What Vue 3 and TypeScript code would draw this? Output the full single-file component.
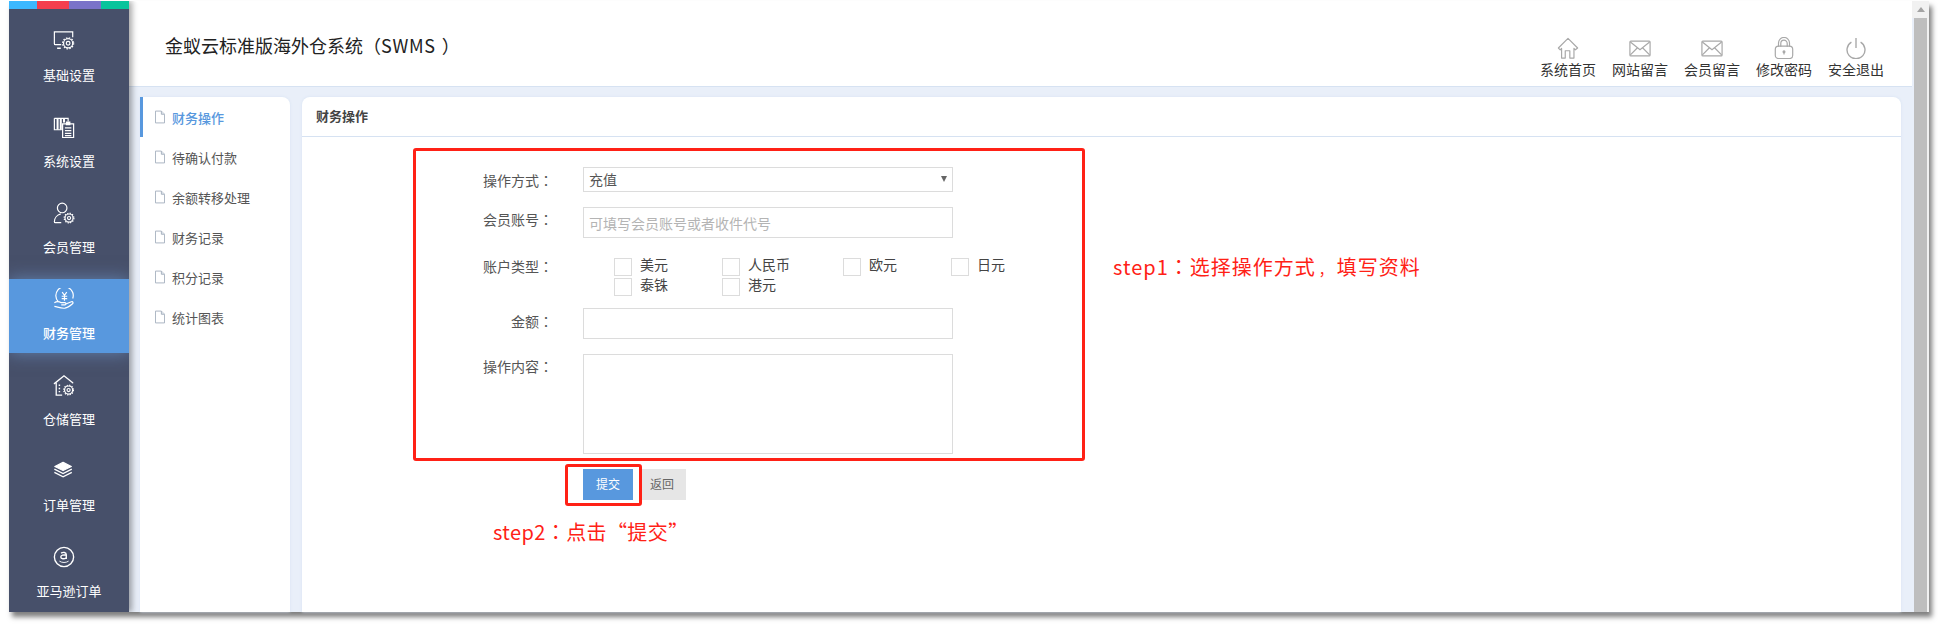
<script setup lang="ts">
const stripes = ['#3cb8ff', '#f43e4e', '#7a73c9', '#08c49c']
const sideItems = [
  { key: 'basic', label: '基础设置' },
  { key: 'system', label: '系统设置' },
  { key: 'member', label: '会员管理' },
  { key: 'finance', label: '财务管理', active: true },
  { key: 'store', label: '仓储管理' },
  { key: 'order', label: '订单管理' },
  { key: 'amazon', label: '亚马逊订单' },
]
const topLinks = [
  { key: 'home', label: '系统首页' },
  { key: 'mail', label: '网站留言' },
  { key: 'mail', label: '会员留言' },
  { key: 'lock', label: '修改密码' },
  { key: 'power', label: '安全退出' },
]
const subMenu = ['财务操作', '待确认付款', '余额转移处理', '财务记录', '积分记录', '统计图表']
const currencies = ['美元', '人民币', '欧元', '日元', '泰铢', '港元']
</script>

<template>
  <div class="page">
    <div class="window">
      <aside class="sidebar">
        <div class="strip">
          <span v-for="c in stripes" :key="c" class="stripe" :style="{ background: c }"></span>
        </div>
        <nav class="side-nav">
          <a v-for="item in sideItems" :key="item.label" class="side-item" :class="{ active: item.active }">
            <svg class="side-icon" viewBox="0 0 24 24" fill="none" stroke="#fff" stroke-width="1.3">
              <template v-if="item.key === 'basic'">
                <path d="M9 16H2.500a1 1 0 0 1-1-1V2h20v6" />
                <path d="M4.500 20h4" stroke-width="1.600" />
                <circle cx="16.500" cy="14.500" r="2" />
                <circle cx="16.500" cy="14.500" r="5" />
                <circle cx="16.500" cy="14.500" r="6" stroke-width="1.400" stroke-dasharray="1.600 1.540" />
              </template>
              <template v-else-if="item.key === 'system'">
                <path d="M1.500 2.500h15V6M1.500 2.500V15h8" />
                <path d="M5 2.500V15M8.500 2.500V15M12 2.500V7" stroke-width="2.200" />
                <path d="M10.500 8.500h12v15h-12z" fill="#47506a" />
                <path d="M14 6h5v4h-5z" fill="#fff" stroke="none" />
                <path d="M13 13h7M13 16h7M13 19h7M13 21.500h7" />
              </template>
              <template v-else-if="item.key === 'member'">
                <circle cx="10" cy="6.500" r="5.200" />
                <path d="M8.500 13C4.500 14 1.500 17.500 1.500 21.500c0 .5.5 1 1 1H9" />
                <circle cx="17.500" cy="17.500" r="1.700" />
                <circle cx="17.500" cy="17.500" r="4.400" />
                <circle cx="17.500" cy="17.500" r="5.300" stroke-width="1.300" stroke-dasharray="1.400 1.375" />
              </template>
              <template v-else-if="item.key === 'finance'">
                <path d="M5.500 14.500A9.500 9.500 0 1 1 21.500 11.500" />
                <path d="M10 4.500l2.500 3.500 2.500-3.500M12.500 8v6M9.500 9h6M9.500 11.500h6" />
                <path d="M1.500 16c3-2 5-1.500 7.500 0h4c1.500 0 1.500 2.500 0 2.500H9M14 17.500l6-2.500c2-.5 2.500 1.500 1 2.500-3 2.500-5 4-8 4.500-4 .5-7-1-11.500-2" stroke-linejoin="round" />
              </template>
              <template v-else-if="item.key === 'store'">
                <path d="M1.500 10.500L12 2l9.500 7.500" stroke-linecap="round" stroke-width="1.500" />
                <path d="M3.500 9.500v13.500H10" stroke-width="1.400" />
                <path d="M7 11.500v1.500M7 15v1.500M7 18.500V20" stroke-width="1.600" />
                <circle cx="17" cy="17.500" r="1.700" />
                <circle cx="17" cy="17.500" r="4.400" />
                <circle cx="17" cy="17.500" r="5.300" stroke-width="1.300" stroke-dasharray="1.400 1.375" />
              </template>
              <template v-else-if="item.key === 'order'">
                <path d="M11 2.500L2 7l9 4.500L20 7z" fill="#fff" stroke-linejoin="round" />
                <path d="M1.500 10l9.500 4.800 9.500-4.800M1.500 13.500l9.500 4.800 9.500-4.800" stroke-width="1.500" />
              </template>
              <template v-else>
                <circle cx="12" cy="12" r="10.500" stroke-width="1.500" />
                <path d="M8.800 7.800c2-1.300 5.700-1.200 5.700 1.700v4.800M14.500 10c-3-.5-6-.2-6 2.100s4 2.400 6 .7" stroke-width="1.500" />
                <path d="M7 16.500c3 2 7 2 10 0" stroke-width="1" />
              </template>
            </svg>
            <span class="side-label">{{ item.label }}</span>
          </a>
        </nav>
      </aside>

      <div class="main">
        <header class="topbar">
          <h1 class="title">金蚁云标准版海外仓系统（<span class="latin">SWMS</span><span class="paren-r">）</span></h1>
          <div class="links">
            <a v-for="link in topLinks" :key="link.label" class="link">
              <svg class="link-icon" viewBox="0 0 24 24" fill="none" stroke="#a8a8a8" stroke-width="1.300">
                <template v-if="link.key === 'home'">
                  <path d="M1.500 12L12 1.500 22.500 12l-2.500 2-1.500-1.500V23h-4.500v-8h-5v8H5V12.500L3.500 14z" stroke-linejoin="round" />
                </template>
                <template v-else-if="link.key === 'mail'">
                  <rect x="1" y="4.500" width="22" height="16" rx="1" />
                  <path d="M1.500 5.500l10.500 8.500 10.500-8.500M1.500 19.500l8-8M22.500 19.500l-8-8" />
                </template>
                <template v-else-if="link.key === 'lock'">
                  <path d="M6 10.500V6.500a6 6 0 0 1 12 0v4M8.500 10.500V7a3.500 3.500 0 0 1 7 0v3.500" />
                  <rect x="2.500" y="10" width="19" height="13.500" rx="3.500" />
                  <circle cx="12" cy="16" r="1" fill="#a8a8a8" />
                  <path d="M12 16.500V19" />
                </template>
                <template v-else>
                  <path d="M12 1V12" stroke-width="1.500" />
                  <path d="M7 5.500a9.800 9.800 0 1 0 10 0" stroke-width="1.500" />
                </template>
              </svg>
              <span>{{ link.label }}</span>
            </a>
          </div>
        </header>

        <div class="body">
          <aside class="submenu">
            <a v-for="(m, i) in subMenu" :key="m" class="sub-item" :class="{ on: i === 0 }">
              <svg class="doc" viewBox="0 0 11 14" fill="none" stroke="#a3aebd" stroke-width="1">
                <path d="M.5.500h6.500l3.500 3.500v9.500H.5z" />
                <path d="M7 .500V4h3.500" fill="#dde3ea" />
              </svg>
              <span>{{ m }}</span>
            </a>
          </aside>

          <section class="panel">
            <div class="panel-head">财务操作</div>
            <div class="panel-body">
              <div class="annotated-row">
                <div class="form-box">
                  <div class="row row-select">
                    <label class="lbl">操作方式<span class="fw">：</span></label>
                    <div class="select"><span>充值</span><i class="caret"></i></div>
                  </div>
                  <div class="row row-input">
                    <label class="lbl">会员账号<span class="fw">：</span></label>
                    <div class="input placeholder">可填写会员账号或者收件代号</div>
                  </div>
                  <div class="row row-check">
                    <label class="lbl">账户类型<span class="fw">：</span></label>
                    <div class="checks">
                      <div v-for="c in currencies" :key="c" class="check">
                        <span class="box"></span><span class="check-text">{{ c }}</span>
                      </div>
                    </div>
                  </div>
                  <div class="row row-amount">
                    <label class="lbl">金额<span class="fw">：</span></label>
                    <div class="input"></div>
                  </div>
                  <div class="row row-text">
                    <label class="lbl">操作内容<span class="fw">：</span></label>
                    <div class="textarea"></div>
                  </div>
                </div>
                <p class="note note-1">step1<span class="fw">：</span>选择操作方式<span class="comma">，</span>填写资料</p>
              </div>
              <div class="actions">
                <span class="btn primary">提交</span>
                <span class="btn back">返回</span>
                <span class="hl"></span>
              </div>
              <p class="note note-2">step2<span class="fw">：</span>点击“提交”</p>
            </div>
          </section>
        </div>
      </div>

      <div class="scrollbar">
        <div class="sb-btn"><i></i></div>
        <div class="sb-thumb"></div>
      </div>
    </div>
  </div>
</template>

<style>
html, body { margin: 0; background: #fff; overflow: hidden; }
</style>

<style scoped>
.page {
  height: 629px;
  padding: 1px 0 0 9px;
  box-sizing: border-box;
  overflow: hidden;
  font-family: "Noto Sans CJK SC", "Liberation Sans", sans-serif;
  text-spacing-trim: space-all;
  color: #333;
}
.fw { font-family: "Noto Sans CJK TC", sans-serif; }
.comma { font-size: 14px; padding: 0 3px; }
.latin { letter-spacing: .7px; }
.paren-r { padding-left: 6px; }
.window {
  width: 1920px;
  height: 611px;
  display: flex;
  position: relative;
  background: #e9eff9;
  box-shadow: 3px 5px 5px rgba(0, 0, 0, .5);
}
.sidebar {
  width: 120px;
  flex: none;
  background: #47506a;
  position: relative;
  z-index: 2;
  box-shadow: 3px 0 6px rgba(0, 0, 0, .35);
  display: flex;
  flex-direction: column;
  overflow: hidden;
  clip-path: inset(0 -12px 0 0 round 0 8px 0 0);
}
.strip { height: 8px; display: flex; flex: none; }
.stripe { width: 32px; }
.stripe:first-child { width: 28px; }
.stripe:last-child { width: 28px; }
.side-nav {
  display: flex;
  flex-direction: column;
  gap: 12px;
  padding-top: 12px;
}
.side-item {
  height: 74px;
  flex: none;
  display: flex;
  flex-direction: column;
  align-items: center;
  color: #fff;
  font-size: 13px;
}
.side-item.active {
  background: #5898de;
  box-shadow: 0 0 16px rgba(120, 170, 230, .55);
  font-weight: 500;
}
.side-icon { width: 22px; height: 22px; margin: 9px 10px 0 0; }
.side-label { margin-top: 13px; line-height: 20px; }
.main {
  flex: 1;
  min-width: 0;
  display: flex;
  flex-direction: column;
}
.topbar {
  height: 85px;
  flex: none;
  background: #fff;
  border-bottom: 1px solid #d6e2f2;
  display: flex;
  justify-content: space-between;
  padding-left: 36px;
}
.title {
  margin: 29px 0 0;
  font-size: 18px;
  font-weight: 400;
  line-height: 30px;
  color: #222;
}
.links { display: flex; padding-right: 20px; align-items: flex-end; }
.link {
  width: 72px;
  display: flex;
  flex-direction: column;
  align-items: center;
  font-size: 14px;
  line-height: 18px;
  color: #333;
  padding-bottom: 8px;
}
.link-icon { width: 22px; height: 22px; margin-bottom: 1px; }
.body {
  flex: 1;
  min-height: 0;
  display: flex;
  gap: 12px;
  padding: 10px 11px 0;
}
.submenu {
  width: 150px;
  flex: none;
  background: #fff;
  border-top-right-radius: 8px;
  box-shadow: 0 0 3px #d6e2f2;
}
.sub-item {
  height: 40px;
  display: flex;
  align-items: center;
  gap: 7px;
  padding-left: 15px;
  font-size: 13px;
  color: #555;
  box-sizing: border-box;
}
.sub-item.on {
  color: #5898de;
  font-weight: 500;
  border-left: 3px solid #5898de;
  padding-left: 12px;
}
.doc { width: 10px; height: 14px; flex: none; }
.panel {
  flex: 1;
  min-width: 0;
  background: #fff;
  border-radius: 8px 8px 0 0;
  box-shadow: 0 0 3px #d6e2f2;
  display: flex;
  flex-direction: column;
}
.panel-head {
  height: 40px;
  flex: none;
  box-sizing: border-box;
  border-bottom: 1px solid #d6e2f2;
  padding-left: 14px;
  line-height: 38px;
  font-size: 13px;
  font-weight: 700;
  color: #444;
}
.panel-body { padding: 11px 0 0 111px; }
.annotated-row { display: flex; align-items: flex-start; gap: 28px; }
.form-box {
  width: 672px;
  height: 313px;
  flex: none;
  box-sizing: border-box;
  border: 3px solid #ff2116;
  border-radius: 3px;
  padding-top: 16px;
  display: flex;
  flex-direction: column;
}
.row { display: flex; font-size: 14px; color: #555; }
.lbl { width: 137px; flex: none; text-align: right; line-height: 20px; }
.row > .select, .row > .input, .row > .textarea { margin-left: 30px; }
.select, .input, .textarea {
  width: 370px;
  box-sizing: border-box;
  border: 1px solid #dcdcdc;
  background: #fff;
}
.select {
  height: 25px;
  line-height: 23px;
  padding: 0 5px;
  position: relative;
  color: #555;
}
.caret {
  position: absolute;
  right: 5px;
  top: 8px;
  border-style: solid;
  border-width: 6px 3px 0;
  border-color: #666 transparent transparent;
}
.input { height: 31px; line-height: 30px; padding: 0 5px; }
.placeholder { color: #b4b4b4; }
.textarea { height: 100px; }
.row-select { height: 40px; }
.row-select .lbl { margin-top: 3px; }
.row-input { height: 51px; }
.row-input .lbl { margin-top: 2px; }
.row-check { height: 50px; }
.row-check .lbl { margin-top: -2px; }
.row-amount { height: 46px; }
.row-amount .lbl { margin-top: 3px; }
.row-text { height: 100px; }
.row-text .lbl { margin-top: 2px; }
.checks {
  margin-left: 61px;
  width: 460px;
  display: grid;
  grid-template-columns: 108px 121px 108px 80px;
  grid-auto-rows: 20px;
  color: #444;
}
.check { display: flex; align-items: flex-start; gap: 8px; line-height: 16px; }
.check-text { margin-top: -2px; }
.box {
  width: 18px;
  height: 18px;
  flex: none;
  box-sizing: border-box;
  border: 1px solid #dcdcdc;
}
.actions {
  position: relative;
  display: flex;
  margin: 8px 0 0 170px;
  width: 200px;
  height: 31px;
}
.btn {
  height: 31px;
  width: 50px;
  line-height: 30px;
  text-align: center;
  font-size: 12px;
}
.primary { background: #5898de; color: #fff; }
.back { width: 42px; padding-right: 3px; margin-left: 8px; background: #e6e6e6; color: #666; }
.hl {
  position: absolute;
  left: -18px;
  top: -5px;
  width: 77px;
  height: 42px;
  box-sizing: border-box;
  border: 3px solid #ff2116;
  border-radius: 3px;
}
.note {
  margin: 0;
  color: #ff2116;
  font-size: 20px;
  line-height: 24px;
}
.note-1 { margin-top: 107px; letter-spacing: 1px; }
.note-2 { margin: 20px 0 0 80px; letter-spacing: .4px; }
.scrollbar {
  width: 17px;
  flex: none;
  display: flex;
  flex-direction: column;
  background: #f1f1f1;
}
.sb-btn {
  height: 17px;
  flex: none;
  display: flex;
  align-items: center;
  justify-content: center;
}
.sb-btn i {
  border-style: solid;
  border-width: 0 4px 5px;
  border-color: transparent transparent #a3a3a3;
}
.sb-thumb {
  flex: 1;
  margin-right: 2px;
  background: #bebebe;
  border-left: 2px solid #e9eff9;
}
</style>
